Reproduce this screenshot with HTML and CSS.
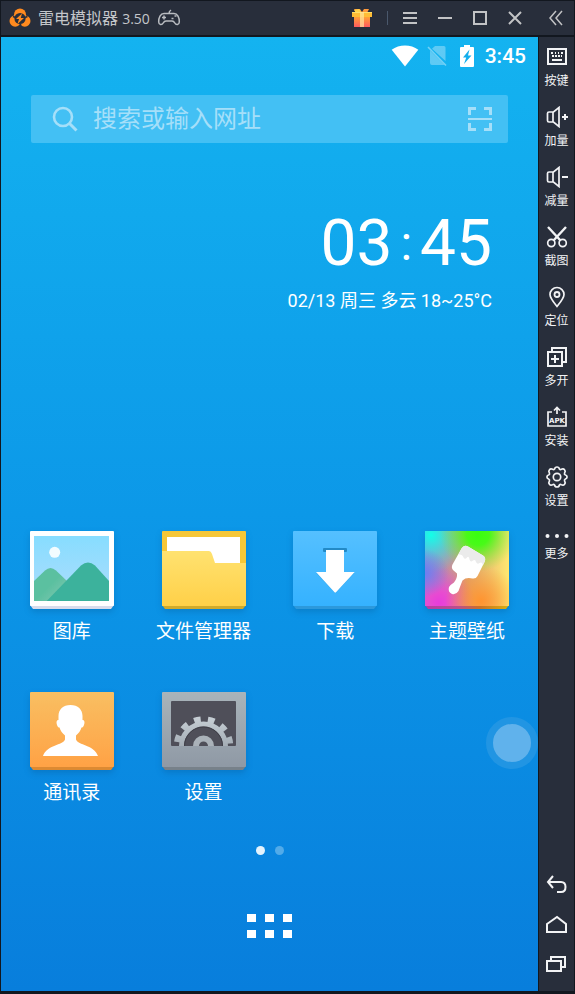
FILE: index.html
```
<!DOCTYPE html>
<html lang="zh-CN">
<head>
<meta charset="utf-8">
<meta name="viewport" content="width=device-width, initial-scale=1">
<title>雷电模拟器</title>
<link rel="stylesheet" href="styles.css">
</head>
<body>
<div class="window">
  <header class="titlebar">
    <svg class="logo" width="22" height="20" viewBox="0 0 22 20" aria-hidden="true">
      <g fill="#ff8a1f"><circle cx="11" cy="6.500" r="6"/><circle cx="6.200" cy="13" r="5.700"/><circle cx="15.800" cy="13" r="5.700"/></g>
      <circle cx="11" cy="10.500" r="5.600" fill="#282e3b"/>
      <path d="M4 8.500l2.500 1M11.500 19v-3M18.500 8.500l-2.500 1" stroke="#282e3b" stroke-width="1.500"/>
      <path d="M13 5.500L7 11h3l-1.500 5 6.500-6h-3.200z" fill="#ff8a1f"/>
    </svg>
    <h1 class="title">雷电模拟器 <span class="version">3.50</span></h1>
    <svg class="gamepad" width="24" height="20" viewBox="0 0 24 20" fill="none" stroke="#b9bcc1" stroke-width="1.500" aria-hidden="true">
      <path d="M7 5.500h10c3.500 0 5.500 4 5.300 8.500-.1 3-3.300 3.200-4.500 1-.8-1.500-1.500-2-2.800-2H9c-1.300 0-2 .5-2.800 2-1.200 2.200-4.400 2-4.500-1C1.500 9.500 3.500 5.500 7 5.500zM12 5.500c0-2 .5-2.500 2-3.500"/>
      <path d="M5 9.500h4M7 7.500v4M14.500 10.500h2M17.500 8h2" />
    </svg>
    <div class="window-controls">
      <button class="control" aria-label="礼包">
        <svg width="20" height="20" viewBox="0 0 20 20">
          <defs><linearGradient id="gift" x2="0" y2="1"><stop stop-color="#ffb02e"/><stop offset="1" stop-color="#ff5a5f"/></linearGradient></defs>
          <path d="M2 1l6 0 2 3 2-3h5l-2 4H4z" fill="#ff9a3c"/><path d="M2 2l5-1 3 4H4z" fill="#ffd34a"/>
          <path d="M2 7h16v12H2z" fill="url(#gift)"/><path d="M0 4h20v5H0z" fill="#ffbd35"/><path d="M0 4h20v1H0z" fill="#ffe06a"/>
          <path d="M8 4h4v15H8z" fill="#ffe7a0" opacity=".7"/>
        </svg>
      </button>
      <span class="divider"></span>
      <button class="control" aria-label="菜单"><svg width="16" height="16" viewBox="0 0 16 16"><path d="M1 3h14M1 8h14M1 13h14"/></svg></button>
      <button class="control" aria-label="最小化"><svg width="16" height="16" viewBox="0 0 16 16"><path d="M1 8h14"/></svg></button>
      <button class="control" aria-label="最大化"><svg width="16" height="16" viewBox="0 0 16 16"><path d="M2 2h12v12H2z"/></svg></button>
      <button class="control" aria-label="关闭"><svg width="16" height="16" viewBox="0 0 16 16"><path d="M2 2l12 12M14 2L2 14"/></svg></button>
    </div>
    <button class="collapse" aria-label="收起"><svg width="16" height="16" viewBox="0 0 16 16"><path d="M7 1L1 8l6 7M13 1L7 8l6 7"/></svg></button>
  </header>

  <main class="screen">
    <div class="statusbar">
      <svg width="28" height="22" viewBox="0 0 28 22" aria-hidden="true"><path d="M14 21.500L.7 4.800C8-1 20-1 27.300 4.800z" fill="#fff"/></svg>
      <svg class="sim" width="20" height="22" viewBox="0 0 20 22" aria-hidden="true"><path d="M8 1h9q1.500 0 1.500 1.500V16L5 3.800zM3 5.500L17.500 20H5q-2 0-2-2z" fill="#fff" opacity=".32"/><path d="M1 2l18 18.500" stroke="#fff" stroke-width="1.600" opacity=".4"/></svg>
      <svg class="battery" width="14" height="22" viewBox="0 0 14 22" aria-hidden="true"><path d="M4 0h6v2h3q1 0 1 1v18q0 1-1 1H1q-1 0-1-1V3q0-1 1-1h3z" fill="#fff"/><path d="M9.500 4.500L3 12.500h3.200L4 19l7.500-8.500H8z" fill="#13aeed"/></svg>
      <time class="status-time">3:45</time>
    </div>

    <form class="search">
      <svg width="26" height="26" viewBox="0 0 26 26" fill="none" aria-hidden="true"><circle cx="11" cy="11" r="9" stroke="#a5dff9" stroke-width="2.600"/><path d="M17.500 17.500l7 7" stroke="#a5dff9" stroke-width="3"/></svg>
      <input class="search-input" type="text" placeholder="搜索或输入网址" aria-label="搜索或输入网址">
      <button class="scan" type="button" aria-label="扫一扫"><svg width="24" height="24" viewBox="0 0 24 24" fill="none" stroke="#a5dff9"><path d="M1.500 8V1.500H8M16 1.500h6.500V8M1.500 16v6.500H8M16 22.500h6.500V16" stroke-width="3"/><path d="M0 12h24" stroke-width="2"/></svg></button>
    </form>

    <section class="clock">
      <time class="clock-time"><span>03</span><span class="colon">:</span><span>45</span></time>
      <p class="clock-date">02/13 周三 多云 18~25°C</p>
    </section>

    <nav class="apps">
      <a class="app" href="#gallery">
        <svg class="app-icon" viewBox="0 0 84 78" aria-hidden="true">
          <defs><linearGradient id="sky" x2="0" y2="1"><stop stop-color="#87ddff"/><stop offset="1" stop-color="#aedcfc"/></linearGradient>
          <linearGradient id="hill" x1="0" y1="0" x2="1" y2="1"><stop offset=".5" stop-color="#5bc0a0"/><stop offset=".8" stop-color="#74c5ab"/></linearGradient></defs>
          <path d="M0 74h84l-3 4H3z" fill="#d8dcec"/><rect width="84" height="75" rx="1" fill="#fff"/>
          <path d="M4 5h75v65H4z" fill="url(#sky)"/><circle cx="24.700" cy="21.300" r="5.500" fill="#f2fcff"/>
          <path d="M4 50L15 39.500q5.500-5 11 0L37 50v20H4z" fill="url(#hill)"/><path d="M16.700 70L51 34.500q7-6 14 0L79 50v20z" fill="#3cb29c"/>
        </svg><span>图库</span></a>
      <a class="app" href="#files">
        <svg class="app-icon" viewBox="0 0 84 78" aria-hidden="true">
          <defs><linearGradient id="folder" x2="0" y2="1"><stop stop-color="#ffe270"/><stop offset="1" stop-color="#ffd048"/></linearGradient></defs>
          <path d="M0 74h84l-3 4H3z" fill="#d0aa2c"/><rect width="84" height="60" rx="1" fill="#f6c737"/>
          <path d="M5 6h73v40H5z" fill="#fff"/><path d="M0 20h47q2 0 3 3l3 9h31v43H0z" fill="url(#folder)"/>
        </svg><span>文件管理器</span></a>
      <a class="app" href="#downloads">
        <svg class="app-icon" viewBox="0 0 84 78" aria-hidden="true">
          <defs><linearGradient id="down" x2="0" y2="1"><stop stop-color="#55c0ff"/><stop offset="1" stop-color="#35b2ff"/></linearGradient></defs>
          <path d="M0 74h84l-3 4H3z" fill="#2c99dc"/><rect width="84" height="75" rx="1" fill="url(#down)"/>
          <rect x="30" y="17" width="24" height="4" rx="1" fill="#238ac6"/><path d="M33 20h18v22h10.500L43 61.500q-.8.700-1.500 0L23 42h10z" fill="#1586c8" opacity=".3"/>
          <path d="M33 19h18v22h10.700L43 61.300q-.8.700-1.500 0L23 41h10z" fill="#fff"/>
        </svg><span>下载</span></a>
      <a class="app" href="#themes">
        <svg class="app-icon" viewBox="0 0 84 78" aria-hidden="true">
          <defs>
            <linearGradient id="base" x2="1" y2="0"><stop stop-color="#a878d8"/><stop offset=".5" stop-color="#dca070"/><stop offset="1" stop-color="#ffe870"/></linearGradient>
            <radialGradient id="g1" gradientUnits="userSpaceOnUse" cx="6" cy="4" r="38"><stop stop-color="#12ffe8"/><stop offset="1" stop-color="#12ffe8" stop-opacity="0"/></radialGradient>
            <radialGradient id="g2" gradientUnits="userSpaceOnUse" cx="53" cy="3" r="38"><stop stop-color="#38ff10"/><stop offset=".3" stop-color="#48fa18"/><stop offset="1" stop-color="#80e840" stop-opacity="0"/></radialGradient>
            <radialGradient id="g3" gradientUnits="userSpaceOnUse" cx="14" cy="72" r="36"><stop stop-color="#e83cdc"/><stop offset=".3" stop-color="#e84cd0"/><stop offset="1" stop-color="#e84cd0" stop-opacity="0"/></radialGradient>
            <radialGradient id="g4" gradientUnits="userSpaceOnUse" cx="56" cy="70" r="36"><stop stop-color="#ff9430"/><stop offset="1" stop-color="#ff9430" stop-opacity="0"/></radialGradient>
            <radialGradient id="g5" gradientUnits="userSpaceOnUse" cx="0" cy="42" r="24"><stop stop-color="#6c80f0"/><stop offset="1" stop-color="#7080e8" stop-opacity="0"/></radialGradient>
            <linearGradient id="lip"><stop stop-color="#b63aa8"/><stop offset=".4" stop-color="#b8508c"/><stop offset=".65" stop-color="#c87028"/><stop offset="1" stop-color="#d8b010"/></linearGradient>
          </defs>
          <path d="M0 74h84l-3 4H3z" fill="url(#lip)"/>
          <g><path d="M0 0h84v75H0z" fill="url(#base)"/><path d="M0 0h84v75H0z" fill="url(#g1)"/><path d="M0 0h84v75H0z" fill="url(#g2)"/><path d="M0 0h84v75H0z" fill="url(#g3)"/><path d="M0 0h84v75H0z" fill="url(#g4)"/><path d="M0 0h84v75H0z" fill="url(#g5)"/></g>
          <path d="M36.500 17.500Q39 13.500 43 15.500L58 24.500Q61.500 27 59.500 31L52.500 45Q51 48 47.500 47.500 41 46 37.500 49.500 36 53 33.500 60 31 64 27 63 22.500 61 24 56 25 54 29 51.500 32.500 47 32 42.500L28 39Q26 36.500 27.500 33.500z" fill="#fff"/>
          <path d="M36.500 17.500Q39 13.500 43 15.500L58 24.500Q61.500 27 59.500 31L58 34Q57 30.500 54.500 32 52.500 34 51 31 50.500 28 48 29.500 45.500 32 44.500 28.500 44 24.500 42 26.500 40 29 38.500 26.500 37.500 23 33.500 23.500z" fill="#ebebeb"/>
        </svg><span>主题壁纸</span></a>
      <a class="app" href="#contacts">
        <svg class="app-icon" viewBox="0 0 84 78" aria-hidden="true">
          <defs><linearGradient id="person" x2="0" y2="1"><stop stop-color="#f9bf62"/><stop offset="1" stop-color="#ffa245"/></linearGradient></defs>
          <path d="M0 74h84l-3 4H3z" fill="#dc8a32"/><rect width="84" height="75" rx="1" fill="url(#person)"/>
          <path d="M40.500 13c7.500 0 12 4.500 12 11v4c2 0 2.500 2 1.500 5-.7 2-1.500 2.500-2.500 2.500-.8 3-3 6-5.500 8v4c2 6 18 5 22 16.500H13C17 52.500 33 53.500 35 47.500v-4c-2.500-2-4.700-5-5.500-8-1 0-1.800-.5-2.500-2.500-1-3-.5-5 1.500-5v-4c0-6.500 4.500-11 12-11z" fill="#fff"/>
        </svg><span>通讯录</span></a>
      <a class="app" href="#settings">
        <svg class="app-icon" viewBox="0 0 84 78" aria-hidden="true">
          <defs><linearGradient id="metal" x2="0" y2="1"><stop stop-color="#a9b4ba"/><stop offset="1" stop-color="#8f99a5"/></linearGradient>
          <linearGradient id="cog" gradientUnits="userSpaceOnUse" x1="0" y1="24" x2="0" y2="54"><stop stop-color="#c8d0d6"/><stop offset="1" stop-color="#a4adb5"/></linearGradient>
          <clipPath id="panel"><path d="M9 9h65v45H9z"/></clipPath></defs>
          <path d="M0 74h84l-3 4H3z" fill="#77818a"/><rect width="84" height="75" rx="1" fill="url(#metal)"/>
          <rect x="9" y="9" width="65" height="45" rx="1" fill="#4f4f59"/>
          <g clip-path="url(#panel)"><circle cx="41.500" cy="54" r="22" fill="none" stroke="url(#cog)" stroke-width="5"/>
            <circle cx="41.500" cy="54" r="26.500" fill="none" stroke="url(#cog)" stroke-width="6.500" stroke-dasharray="6.500 7.375" stroke-dashoffset="-3.700"/>
            <circle cx="41.500" cy="54" r="19" fill="none" stroke="#3e3e47" stroke-width="1"/>
            <circle cx="41.500" cy="54" r="7.500" fill="none" stroke="#aab2b9" stroke-width="6"/></g>
        </svg><span>设置</span></a>
    </nav>

    <div class="pages"><span class="page page-current"></span><span class="page"></span></div>
    <button class="drawer" aria-label="所有应用"><i></i><i></i><i></i><i></i><i></i><i></i></button>
    <button class="assist" aria-label="悬浮球"></button>
  </main>

  <aside class="sidebar">
    <div class="tools">
      <button class="tool"><svg width="22" height="22" viewBox="0 0 22 22"><path d="M2 3h18v15H2z" stroke-width="2"/><path d="M5 7h2m2 0h1m2 0h1m2 0h2M6 10h2m1 0h2m1 0h2m1 0h1M6 14h10" stroke-width="1.800"/></svg>按键</button>
      <button class="tool"><svg width="22" height="22" viewBox="0 0 22 22"><path d="M13 1.500v19L7.500 16H3q-1.500 0-1.500-1.500v-7Q1.500 6 3 6h4.500zM7 6v10"/><path d="M16 11h6M19 8v6" stroke-width="2"/></svg>加量</button>
      <button class="tool"><svg width="22" height="22" viewBox="0 0 22 22"><path d="M13 1.500v19L7.500 16H3q-1.500 0-1.500-1.500v-7Q1.500 6 3 6h4.500zM7 6v10"/><path d="M16 11h6" stroke-width="2"/></svg>减量</button>
      <button class="tool"><svg width="22" height="22" viewBox="0 0 22 22"><path d="M2 1l12.500 13.500M20 1L7.500 14.500" stroke-width="2.400"/><circle cx="5.300" cy="17" r="3.600"/><circle cx="16.700" cy="17" r="3.600"/></svg>截图</button>
      <button class="tool"><svg width="22" height="22" viewBox="0 0 22 22"><path d="M11 20.500C7 15.500 4 12 4 8.500a7 7 0 0114 0c0 3.500-3 7-7 12z"/><circle cx="11" cy="8.500" r="2.500" stroke-width="1.800"/></svg>定位</button>
      <button class="tool"><svg width="22" height="22" viewBox="0 0 22 22"><path d="M2 6h14v14H2zM6 5.500V2h14v14h-4M5 13h8M9 9v8" stroke-width="2"/></svg>多开</button>
      <button class="tool"><svg width="22" height="22" viewBox="0 0 22 22"><path d="M6 6H2v14h18V6h-4M11 8V2M8 4.500L11 1.500l3 3"/><text class="apk" x="11" y="17" text-anchor="middle">APK</text></svg>安装</button>
      <button class="tool"><svg width="22" height="22" viewBox="0 0 22 22"><path d="M11 1q2 0 2.400 2 .8 1 2 .3 2-.9 3.200.5 1.200 1.300 0 3.200-.5 1.300.5 1.800 2 .6 2 2.200t-2 2.200q-1 .5-.5 1.800 1.200 1.900 0 3.200-1.200 1.400-3.200.5-1.200-.7-2 .3Q13 21 11 21t-2.400-2q-.8-1-2-.3-2 .9-3.200-.5-1.200-1.300 0-3.200.5-1.300-.5-1.800-2-.6-2-2.200t2-2.200q1-.5.500-1.800-1.200-1.900 0-3.200 1.200-1.400 3.200-.5 1.200.7 2-.3Q9 1 11 1z"/><circle cx="11" cy="11" r="3.700"/></svg>设置</button>
      <button class="tool tool-more"><svg width="24" height="20" viewBox="0 0 24 20"><g fill="#f2f3f5" stroke="none"><circle cx="2.500" cy="10" r="2"/><circle cx="12" cy="10" r="2"/><circle cx="21.500" cy="10" r="2"/></g></svg>更多</button>
    </div>
    <div class="keys">
      <button class="key" aria-label="返回"><svg width="22" height="22" viewBox="0 0 22 22"><path d="M7 3L2 9l5 6M2 9h13q4.500 0 4.500 5t-4.500 5H11" stroke-width="2"/></svg></button>
      <button class="key" aria-label="主页"><svg width="22" height="22" viewBox="0 0 22 22"><path d="M1 11l10-7 9 7v8H1z" stroke-width="2"/></svg></button>
      <button class="key" aria-label="最近任务"><svg width="22" height="22" viewBox="0 0 22 22"><path d="M1 8h14v10H1zM5 7.500V4h14v10h-4" stroke-width="2"/></svg></button>
    </div>
  </aside>
</div>
</body>
</html>
```

FILE: styles.css
```
* { box-sizing: border-box; }

body {
  margin: 0;
  background: #12171f;
  font-family: Roboto, "Noto Sans CJK SC", sans-serif;
}

button {
  padding: 0;
  border: 0;
  background: none;
  font-family: inherit;
  cursor: pointer;
}

svg { display: block; flex: none; }

.window {
  display: grid;
  grid-template-columns: 1fr 35px;
  grid-template-rows: 34px 1fr;
  gap: 2px 1px;
  min-height: 100vh;
  padding: 1px 1px 3px;
}

/* Title bar */
.titlebar {
  grid-column: 1 / -1;
  display: flex;
  align-items: center;
  background: #282e3b;
  padding-left: 8px;
}

.title {
  margin: 0 7px;
  color: #c4c6ca;
  font: 16px/24px "Open Sans", "Noto Sans CJK SC", sans-serif;
  white-space: nowrap;
}

.version { font-size: 14px; }

.window-controls {
  display: flex;
  align-items: center;
  gap: 19px;
  margin-left: auto;
}

.window-controls svg,
.collapse svg {
  fill: none;
  stroke: #c2c3c5;
  stroke-width: 2;
}

.window-controls svg path[fill] { stroke: none; }

.divider {
  width: 1px;
  height: 14px;
  margin: 0 -5px 0 -4px;
  background: #4a586c;
}

.collapse {
  display: flex;
  justify-content: center;
  width: 35px;
  margin-left: 16px;
}

.collapse svg { stroke-width: 1.5; }

/* Launcher */
.screen {
  position: relative;
  display: flex;
  flex-direction: column;
  background: linear-gradient(#14b3f0, #0c98e8 50%, #087edc);
  color: #fff;
}

.statusbar {
  display: flex;
  align-items: center;
  justify-content: flex-end;
  height: 38px;
  padding-right: 12px;
}

.sim { margin-left: 8px; }
.battery { margin-left: 13px; }

.status-time {
  margin-left: 11px;
  font-size: 21px;
  font-weight: 500;
}

.search {
  display: flex;
  align-items: center;
  height: 48px;
  margin: 20px 30px 0;
  padding: 0 16px 0 21px;
  border-radius: 2px;
  background: #43c0f4;
}

.search-input {
  flex: 1;
  min-width: 0;
  margin-left: 15px;
  padding: 0;
  border: 0;
  outline: 0;
  background: none;
  color: #fff;
  font: 24px/36px Roboto, "Noto Sans CJK SC", sans-serif;
}

.search-input::placeholder { color: #a5dff9; opacity: 1; }

.clock {
  margin: 65px 46px 0 0;
  text-align: right;
}

.clock-time {
  display: flex;
  justify-content: flex-end;
  font-size: 64px;
  line-height: 72px;
}

.colon {
  margin: 0 8px;
  font-size: 48px;
}

.clock-date {
  margin: 7px 0 0;
  font-size: 18px;
  line-height: 28px;
}

.apps {
  display: grid;
  grid-template-columns: repeat(4, 1fr);
  row-gap: 46px;
  margin-top: 216px;
  padding: 0 5px;
}

.app {
  display: flex;
  flex-direction: column;
  align-items: center;
  gap: 9px;
  color: #fff;
  font-size: 19px;
  line-height: 28px;
  text-decoration: none;
  white-space: nowrap;
}

.app-icon {
  width: 84px;
  height: 78px;
  filter: drop-shadow(0 3px 3px rgba(0, 50, 100, .2));
}

.pages {
  display: flex;
  justify-content: center;
  gap: 10px;
  margin-top: 39px;
}

.page {
  width: 9px;
  height: 9px;
  border-radius: 50%;
  background: #52abe9;
}

.page-current { background: #e4f3fd; }

.drawer {
  display: grid;
  grid-template-columns: repeat(3, 9px);
  grid-auto-rows: 8px;
  gap: 8px 9px;
  align-self: center;
  margin: 59px 0 52px;
}

.drawer i { background: #fff; }

.assist {
  position: absolute;
  right: 0;
  top: 680px;
  width: 52px;
  height: 52px;
  border: 7px solid #2195e3;
  border-radius: 50%;
  background: #60b2ec;
}

/* Tool strip */
.sidebar {
  display: flex;
  flex-direction: column;
  justify-content: space-between;
  background: #282e3b;
  padding: 9px 0 7px;
}

.sidebar svg {
  fill: none;
  stroke: #f2f3f5;
  stroke-width: 1.7;
}

.tools,
.keys {
  display: flex;
  flex-direction: column;
}

.tool {
  display: flex;
  flex-direction: column;
  align-items: center;
  gap: 5px;
  height: 60px;
  color: #f2f3f5;
  font-size: 12px;
  line-height: 16px;
}

.tool-more { gap: 0; }

.apk {
  fill: #f2f3f5;
  stroke: none;
  font: bold 7px "DejaVu Sans", sans-serif;
}

.key {
  display: flex;
  align-items: center;
  justify-content: center;
  height: 40px;
}
```
